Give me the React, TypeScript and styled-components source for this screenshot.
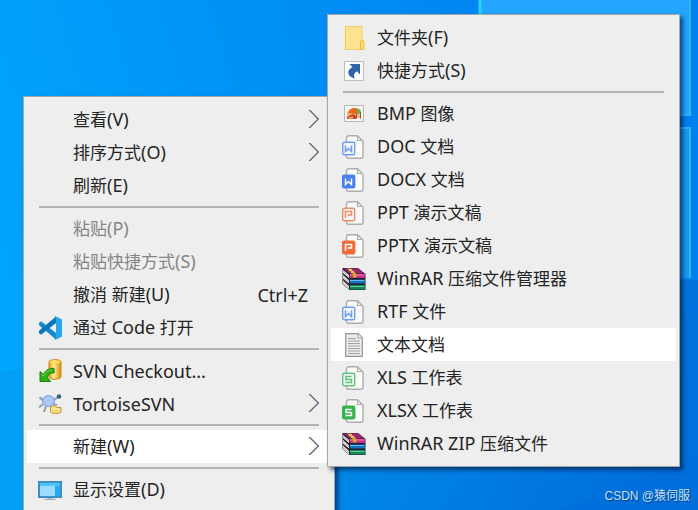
import React from "react";
import styled, { createGlobalStyle } from "styled-components";

const GlobalStyle = createGlobalStyle`
  html, body, #root { height: 100%; margin: 0; }
  body {
    overflow: hidden;
    font-family: "Noto Sans", "Noto Sans CJK SC", sans-serif;
  }
`;

const Desktop = styled.main`
  position: relative;
  height: 100%;
  overflow: hidden;
  background: #008cec;
`;

const Wallpaper = styled.svg`
  position: absolute;
  inset: 0;
  width: 100%;
  height: 100%;
`;

const MenuPanel = styled.ul<{ $left: number; $top: number; $width: number }>`
  position: absolute;
  left: ${(p) => p.$left}px;
  top: ${(p) => p.$top}px;
  width: ${(p) => p.$width}px;
  box-sizing: border-box;
  margin: 0;
  padding: 6px 3px;
  list-style: none;
  background: #eeeeee;
  border: 1px solid #a3a8ab;
  box-shadow: 3px 3px 4px rgba(0, 25, 60, 0.65);
`;

const MenuItem = styled.button<{ $active?: boolean }>`
  display: grid;
  grid-template-columns: 24px 1fr auto;
  column-gap: 11px;
  align-items: center;
  width: 100%;
  height: 33px;
  padding: 0 11px;
  border: 0;
  background: ${(p) => (p.$active ? "#ffffff" : "transparent")};
  color: #242424;
  font: inherit;
  font-size: 18px;
  line-height: 24px;
  text-align: left;
  white-space: nowrap;

  &:disabled { color: #858585; }
  &:hover:enabled { background: #ffffff; }
`;

const Han = styled.span`
  font-size: 17px;
`;

const IconSlot = styled.span`
  display: flex;
  width: 24px;
  height: 24px;
`;

const Shortcut = styled.span`
  padding-right: 12px;
`;

const Separator = styled.li`
  height: 2px;
  margin: 4px 12px;
  background: #b2b2b2;
`;

const Watermark = styled.footer`
  position: absolute;
  right: 8px;
  bottom: 4px;
  color: #c4e2fa;
  font-family: "Liberation Sans", "Noto Sans CJK SC", sans-serif;
  font-size: 12px;
  line-height: 20px;
  text-shadow: 1px 1px 1px rgba(0, 30, 80, 0.6);
`;

const Icon = ({ children }: { children: React.ReactNode }) => (
  <svg width="24" height="24" viewBox="0 0 24 24" fill="none" aria-hidden="true">
    {children}
  </svg>
);

const FolderIcon = () => (
  <Icon>
    <path d="M3.500 .5h16.500V15l1 1v7.500H3.500z" fill="#ffe392" stroke="#f2cf62" />
    <path d="M3.500 .5v23" stroke="#f3c93f" />
    <path d="M18.500 23.500V15l2-1.500 1.500 2.500v7.500z" fill="#ffdc72" stroke="#e9bd3c" />
  </Icon>
);

const LinkIcon = () => (
  <Icon>
    <path d="M2.500 2.500h19v19h-19z" fill="#fbfbfb" stroke="#bdbdbd" />
    <path d="M7.500 5H18v10.500l-3-3.200c-3 1.500-3.800 4-2.300 7.200C8 18.500 5.500 15 6.500 12c.7-2 2.500-3 4-4z" fill="#2f62a6" />
  </Icon>
);

const PictureIcon = () => (
  <Icon>
    <path d="M2.500 3.500h19v16h-19z" fill="#f6f6f4" stroke="#b7b7b7" />
    <path d="M5 12c1-4 3-6 7-6 4 0 7 2 7 6v4H5z" fill="#f3b27b" />
    <path d="M6 11c2-5 9-7 11-2l-4 3z" fill="#ef641b" />
    <path d="M14 7c3-1 5 1 5 4l-4 1z" fill="#76a943" />
    <path d="M5 15l6-3 3 2v3H5z" fill="#c73f28" />
    <path d="M6 15.500l5-1v2H6z" fill="#f7c35c" />
    <path d="M14.500 11v5.500M18.500 10v6.500" stroke="#7b5845" />
  </Icon>
);

const letterShapes = {
  W: "M3.500 10.500v6l3-3 3 3v-6",
  P: "M3.500 17v-6.500h6v3.500h-4",
  S: "M9.500 10.500h-5.500v3h5.500v3H3.500",
};

const OfficeIcon = ({ letter, color, solid }: { letter: keyof typeof letterShapes; color: string; solid?: boolean }) => (
  <Icon>
    <path d="M6.500 .8h9l5.500 5.500v15a2 2 0 0 1-2 2H6.500a2 2 0 0 1-2-2V2.800a2 2 0 0 1 2-2z" fill="#fafafa" stroke="#adadad" strokeWidth="1.400" />
    <path d="M15.500 1v4.500H21" stroke="#adadad" strokeWidth="1.200" />
    <rect x=".7" y="7.200" width="12" height="12.500" rx="1.500" fill={solid ? color : "#f2f5fa"} stroke={color} strokeWidth="1.400" />
    <path d={letterShapes[letter]} stroke={solid ? "#ffffff" : color} strokeWidth="1.500" />
  </Icon>
);

const ArchiveIcon = () => (
  <Icon>
    <path d="M.5 1H16l7.500 6v16H7.500L.5 17z" fill="#2a2430" />
    <path d="M1.500 1.500h14l6.500 5H7.500z" fill="#a3246c" />
    <path d="M7.500 7H23v4H7.500z" fill="#c92a86" />
    <path d="M8 8h14" stroke="#ef86c0" />
    <path d="M8 12.500h15v4H8z" fill="#1672bd" />
    <path d="M8 13.500h14" stroke="#62bff0" />
    <path d="M8 18h15v4.500H8z" fill="#138757" />
    <path d="M8 19.500h14" stroke="#5acb9a" />
    <path d="M1 3l6 5v3L1 6zM1 8l6 5.500v3L1 11.500zM1 13.500L7 19v3l-6-5z" fill="#f1eeea" />
    <path d="M1 4.500l6 5M1 9.800l6 5.200M1 15.200l6 5.300" stroke="#958f95" strokeWidth=".6" />
    <path d="M5 1.500h3.500l6 5.500v3.500h-3.500V7z" fill="#d6a72d" />
    <path d="M7 3.500l3-1M9 5.500l3-1" stroke="#ffe98c" />
    <path d="M7 11.800h16M7 17.300h16" stroke="#182037" />
  </Icon>
);

const TextIcon = () => (
  <Icon>
    <path d="M3.700 .7h12.600l4 4v18.600H3.700z" fill="#ececec" stroke="#969696" strokeWidth="1.200" />
    <path d="M6 5.500h8M6 8h12M6 10.500h12M6 13h12M6 15.500h12M6 18h12M6 20.500h12" stroke="#a3a3a3" />
    <path d="M16 1v4h4" fill="#fafafa" stroke="#999999" />
  </Icon>
);

const CodeIcon = () => (
  <Icon>
    <path d="M1 7l2-1.800L18 17v6.500L1 9.200z" fill="#1688cf" />
    <path d="M1 17l2 1.800L18 7V.5L1 14.800z" fill="#0877be" />
    <path d="M17.500 .3l5.700 2.600c.5.300.8.700.8 1.200v15.800c0 .5-.3.900-.8 1.200l-5.700 2.600-1.500-.8c1.100.3 2-.4 2-1.500V2.600c0-1.100-.9-1.800-2-1.500z" fill="#27a5ed" />
  </Icon>
);

const CheckoutIcon = () => (
  <Icon>
    <defs>
      <linearGradient id="drum">
        <stop stopColor="#dc9a20" />
        <stop offset=".4" stopColor="#fff08b" />
        <stop offset="1" stopColor="#d78a12" />
      </linearGradient>
    </defs>
    <path d="M11 2.500C12 0 22 0 23 2.500V18c-1 3-11 3-12 0z" fill="url(#drum)" stroke="#ce8914" />
    <ellipse cx="17" cy="3" rx="5.500" ry="1.800" fill="#ffdc63" />
    <path d="M2 12.500l3.500 3C7 11.500 11 8.800 16 9.500v4.500c-3-.5-5.500 1-6.500 4.500l3 4H2z" fill="#30ae18" stroke="#148408" />
    <path d="M3 15l3 2c1.500-4 4-6 8-6" stroke="#7bd956" />
  </Icon>
);

const TortoiseIcon = () => (
  <Icon>
    <path d="M5 8L1.500 5.500M5 12l-4 3.500M8 14l-2 6M16 8l5-4M15 12l4 1" stroke="#93a5b5" strokeWidth="2.200" />
    <circle cx="21" cy="4.500" r="2.200" fill="#326880" />
    <ellipse cx="10.500" cy="9" rx="6" ry="5.500" fill="#a7c4f8" stroke="#839bd5" />
    <path d="M7 8.500L10.500 5.500 14.500 8.500l-4 3.500z" stroke="#bed4ff" />
    <path d="M12.500 14.500l4-1 2.500 2h4v4.500c-1 2-9 2-10.500 0z" fill="#f6d877" stroke="#bd9849" />
    <path d="M14 17h8" stroke="#fff1ad" />
  </Icon>
);

const DisplayIcon = () => (
  <Icon>
    <path d="M.7 3.700h22.600v15.600H.7z" fill="#2ca5ef" stroke="#4288b7" strokeWidth="1.400" />
    <path d="M2 5h20v3H2z" fill="#51c2fb" />
    <path d="M2 8h15v10H2z" fill="#9edcff" />
    <path d="M9 20h6v1.500H9z" fill="#a3c1d5" />
    <path d="M6 21.500h12" stroke="#a8b5bf" />
  </Icon>
);

const Chevron = () => (
  <svg width="13" height="22" viewBox="0 0 13 22" fill="none" aria-hidden="true">
    <path d="M1.500 1l9 9-9 9" stroke="#e0a67c" />
    <path d="M3 1l9 9-9 9" stroke="#6f97d2" />
    <path d="M2.300 1l9 9-9 9" stroke="#5b5366" />
  </svg>
);

type Entry = {
  label: string;
  icon?: React.ReactNode;
  keys?: string;
  submenu?: boolean;
  active?: boolean;
  disabled?: boolean;
};

const desktopEntries: (Entry | null)[] = [
  { label: "查看(V)", submenu: true },
  { label: "排序方式(O)", submenu: true },
  { label: "刷新(E)" },
  null,
  { label: "粘贴(P)", disabled: true },
  { label: "粘贴快捷方式(S)", disabled: true },
  { label: "撤消 新建(U)", keys: "Ctrl+Z" },
  { label: "通过 Code 打开", icon: <CodeIcon /> },
  null,
  { label: "SVN Checkout...", icon: <CheckoutIcon /> },
  { label: "TortoiseSVN", icon: <TortoiseIcon />, submenu: true },
  null,
  { label: "新建(W)", submenu: true, active: true },
  null,
  { label: "显示设置(D)", icon: <DisplayIcon /> },
];

const newEntries: (Entry | null)[] = [
  { label: "文件夹(F)", icon: <FolderIcon /> },
  { label: "快捷方式(S)", icon: <LinkIcon /> },
  null,
  { label: "BMP 图像", icon: <PictureIcon /> },
  { label: "DOC 文档", icon: <OfficeIcon letter="W" color="#6c9cf5" /> },
  { label: "DOCX 文档", icon: <OfficeIcon letter="W" color="#4681ed" solid /> },
  { label: "PPT 演示文稿", icon: <OfficeIcon letter="P" color="#f58b62" /> },
  { label: "PPTX 演示文稿", icon: <OfficeIcon letter="P" color="#f16b37" solid /> },
  { label: "WinRAR 压缩文件管理器", icon: <ArchiveIcon /> },
  { label: "RTF 文件", icon: <OfficeIcon letter="W" color="#6c9cf5" /> },
  { label: "文本文档", icon: <TextIcon />, active: true },
  { label: "XLS 工作表", icon: <OfficeIcon letter="S" color="#60c571" /> },
  { label: "XLSX 工作表", icon: <OfficeIcon letter="S" color="#36b34b" solid /> },
  { label: "WinRAR ZIP 压缩文件", icon: <ArchiveIcon /> },
];

/* Chinese runs are set one size below the Latin ones. */
const Label = ({ text }: { text: string }) => (
  <span>
    {text.split(/([\u4e00-\u9fff]+)/).map((run, index) => (index % 2 ? <Han key={index}>{run}</Han> : run))}
  </span>
);

const Menu = ({ label, entries, left, top, width }: { label: string; entries: (Entry | null)[]; left: number; top: number; width: number }) => (
  <MenuPanel role="menu" aria-label={label} $left={left} $top={top} $width={width}>
    {entries.map((entry, index) =>
      entry ? (
        <li role="none" key={entry.label}>
          <MenuItem type="button" role="menuitem" $active={entry.active} disabled={entry.disabled} aria-haspopup={entry.submenu ? "menu" : undefined}>
            <IconSlot>{entry.icon}</IconSlot>
            <Label text={entry.label} />
            {entry.keys && <Shortcut>{entry.keys}</Shortcut>}
            {entry.submenu && <Chevron />}
          </MenuItem>
        </li>
      ) : (
        <Separator role="separator" key={index} />
      )
    )}
  </MenuPanel>
);

export default function App() {
  return (
    <Desktop>
      <GlobalStyle />
      <Wallpaper viewBox="0 0 698 510" preserveAspectRatio="none" aria-hidden="true">
        <defs>
          <linearGradient id="sky" x1="0" y1=".6" x2="1" y2=".4">
            <stop stopColor="#00a5fc" />
            <stop offset=".5" stopColor="#008ff5" />
            <stop offset="1" stopColor="#007fee" />
          </linearGradient>
          <linearGradient id="floor" x1="0" y1="0" x2="1" y2=".3">
            <stop stopColor="#008eea" />
            <stop offset="1" stopColor="#0070dc" />
          </linearGradient>
        </defs>
        <path d="M0 0h698v510H0z" fill="url(#sky)" />
        <path d="M0 372l40-8v146H0z" fill="#009ff3" />
        <path d="M330 280h368v230H330z" fill="url(#floor)" />
        <path d="M560 510l138-52v52z" fill="#006dda" opacity=".6" />
        <path d="M480 0h211v115H480z" fill="#22a4ff" />
        <path d="M480 0v115" stroke="#26d5ff" strokeWidth="3" />
        <path d="M690 0v115H480" fill="none" stroke="#28b6fc" strokeWidth="2" />
        <path d="M480 128h211v150H480z" fill="#159bf2" />
        <path d="M480 128h210v150" fill="none" stroke="#28b6fc" strokeWidth="2" />
      </Wallpaper>
      <Menu label="桌面" entries={desktopEntries} left={23} top={96} width={312} />
      <Menu label="新建" entries={newEntries} left={327} top={14} width={353} />
      <Watermark>CSDN @猿伺服</Watermark>
    </Desktop>
  );
}
